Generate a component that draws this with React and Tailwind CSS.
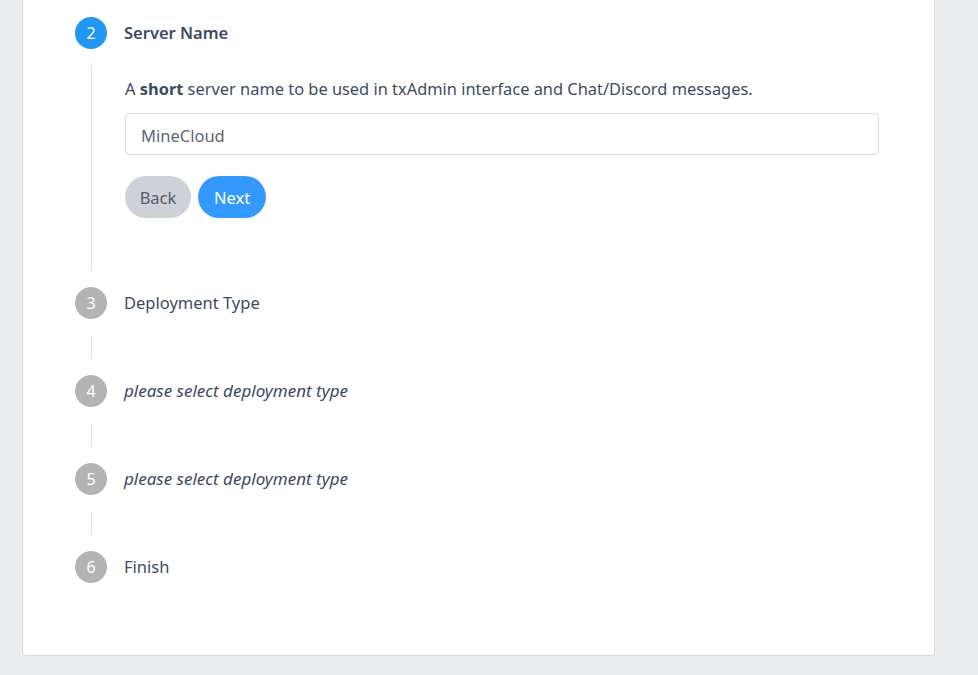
import React from 'react';

const Step = ({ n, active, children, italic }) => (
    <div className="flex items-center h-8">
        <div className={`w-8 h-8 rounded-full flex items-center justify-center text-white text-[16px] shrink-0 ${active ? 'bg-[#2196f3]' : 'bg-[#b4b4b4]'}`}>
            {n}
        </div>
        <div className={`ml-[17px] text-[#3c4b64] ${active ? 'font-semibold' : ''} ${italic ? 'italic text-[17px]' : ''}`}>
            {children}
        </div>
    </div>
);

const Connector = () => (
    <div className="flex py-[17px]">
        <div className="w-8 flex justify-center">
            <div className="w-px bg-[#e2e2e2] h-[22px]"></div>
        </div>
    </div>
);

const App = () => {
    return (
        <div className="w-[978px] h-[675px] bg-[#ebedef] overflow-hidden font-['Noto_Sans',sans-serif] text-[16.5px]">
            <div className="ml-[22px] w-[913px] h-[656px] bg-white border border-[#d8dbe0] border-t-0 rounded-b-[4px] pl-[52px] pt-[17px]">
                {/* active step */}
                <Step n={2} active>Server Name</Step>
                <div className="flex mt-[17px]">
                    <div className="w-8 flex justify-center shrink-0">
                        <div className="w-px bg-[#e2e2e2] h-[204px]"></div>
                    </div>
                    <div className="ml-[18px] w-[754px]">
                        <p className="text-[#3c4b64] leading-6 mt-[11px] text-[16.4px]">
                            A <b className="font-bold">short</b> server name to be used in txAdmin interface and Chat/Discord messages.
                        </p>
                        <input
                            type="text"
                            defaultValue="MineCloud"
                            className="mt-3 w-full h-[42px] px-[15px] pt-[2px] border border-[#d8dbe0] rounded-[4px] text-[#5c6873] outline-none"
                        />
                        <div className="flex gap-[7px] mt-[21px]">
                            <button className="h-[42px] w-[66px] pt-[2px] rounded-full bg-[#ced2d8] text-[#4f5d73]">Back</button>
                            <button className="h-[42px] w-[68px] pt-[2px] rounded-full bg-[#3399ff] text-white">Next</button>
                        </div>
                    </div>
                </div>

                <div className="mt-[17px]">
                    <Step n={3}>Deployment Type</Step>
                </div>
                <Connector />
                <Step n={4} italic>please select deployment type</Step>
                <Connector />
                <Step n={5} italic>please select deployment type</Step>
                <Connector />
                <Step n={6}>Finish</Step>
            </div>
        </div>
    );
};

export default App;
